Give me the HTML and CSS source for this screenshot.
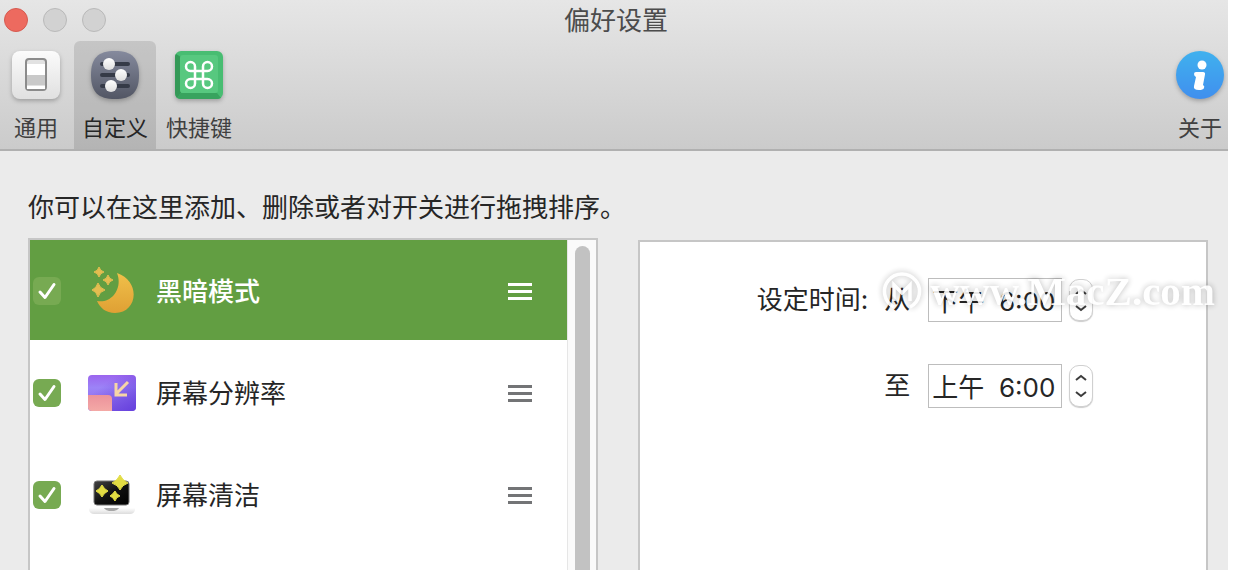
FILE: index.html
```
<!DOCTYPE html>
<html lang="zh-CN">

<head>
    <meta charset="UTF-8">
    <meta name="viewport" content="width=device-width, initial-scale=1.0">
    <title>偏好设置</title>
    <link rel="stylesheet" href="styles.css">
</head>

<body>
    <div class="window">
        <header class="header">
            <div class="titlebar">
                <div class="lights">
                    <button class="light light-close" type="button" aria-label="关闭"></button>
                    <button class="light" type="button" aria-label="最小化"></button>
                    <button class="light" type="button" aria-label="缩放"></button>
                </div>
                <h1 class="title">偏好设置</h1>
            </div>
            <nav class="toolbar">
                <button class="tab" type="button">
                    <svg class="tab-icon" viewBox="0 0 48 48">
                        <defs>
                            <linearGradient id="gPlate" x1="0" y1="0" x2="0" y2="1">
                                <stop offset="0" stop-color="#fbfbfb"/>
                                <stop offset="1" stop-color="#e0e0e0"/>
                            </linearGradient>
                        </defs>
                        <rect width="48" height="48" rx="8" fill="url(#gPlate)"/>
                        <rect x="14" y="8" width="20" height="31" rx="3" fill="#e2e2e2" stroke="#8b8b8b" stroke-width="2"/>
                        <rect x="15" y="13" width="18" height="11" fill="#fff"/>
                        <rect x="15" y="24" width="18" height="10" fill="#c9c9c9"/>
                        <rect x="15" y="35" width="18" height="3" fill="#fff"/>
                    </svg>
                    <span>通用</span>
                </button>
                <button class="tab tab-active" type="button">
                    <svg class="tab-icon" viewBox="0 0 48 48">
                        <defs>
                            <linearGradient id="gSlate" x1="0" y1="0" x2="0" y2="1">
                                <stop offset="0" stop-color="#858a9d"/>
                                <stop offset="1" stop-color="#525664"/>
                            </linearGradient>
                            <linearGradient id="gKnob" x1="0" y1="0" x2="0" y2="1">
                                <stop offset="0" stop-color="#fff"/>
                                <stop offset="1" stop-color="#dedede"/>
                            </linearGradient>
                        </defs>
                        <path d="M24 0C41 0 48 7 48 24S41 48 24 48 0 41 0 24 7 0 24 0Z" fill="url(#gSlate)"/>
                        <path d="M11 13H37M11 24H37M11 35H37" stroke="#353a47" stroke-width="4" stroke-linecap="round"/>
                        <circle cx="18" cy="13" r="6" fill="url(#gKnob)"/>
                        <circle cx="30" cy="24" r="6" fill="url(#gKnob)"/>
                        <circle cx="20" cy="35" r="6" fill="url(#gKnob)"/>
                    </svg>
                    <span>自定义</span>
                </button>
                <button class="tab" type="button">
                    <svg class="tab-icon" viewBox="0 0 48 48">
                        <rect width="48" height="48" rx="6" fill="#48bd72"/>
                        <path d="M1 3L6 6V42L2 47Q0 45 0 42V6Q0 4 1 3Z" fill="#349957"/>
                        <path d="M2 47L6 42H42L46 47Q44 48 42 48H6Q4 48 2 47Z" fill="#38a35e"/>
                        <rect x="5" y="4" width="38" height="38" rx="3" fill="#57c87f"/>
                        <path d="M20 20H28V28H20ZM20 20H15.500A4.500 4.500 0 1 1 20 15.500ZM28 20V15.500A4.500 4.500 0 1 1 32.500 20ZM28 28H32.500A4.500 4.500 0 1 1 28 32.500ZM20 28V32.500A4.500 4.500 0 1 1 15.500 28Z" fill="none" stroke="#fff" stroke-width="2.500"/>
                    </svg>
                    <span>快捷键</span>
                </button>
                <button class="tab tab-about" type="button">
                    <svg class="tab-icon" viewBox="0 0 48 48">
                        <defs>
                            <linearGradient id="gBlue" x1="0" y1="0" x2="0" y2="1">
                                <stop offset="0" stop-color="#40b1ee"/>
                                <stop offset="1" stop-color="#408fee"/>
                            </linearGradient>
                        </defs>
                        <circle cx="24" cy="24" r="24" fill="url(#gBlue)"/>
                        <circle cx="26" cy="14" r="4.500" fill="#fff"/>
                        <path d="M20 21H27Q29.500 21 29 23.500L27 34Q29 35 28 37Q27 39 23 39Q17 39 18 35L20 26Q18 25 18 23Q18 21 20 21Z" fill="#fff"/>
                    </svg>
                    <span>关于</span>
                </button>
            </nav>
        </header>

        <main class="content">
            <p class="intro">你可以在这里添加、删除或者对开关进行拖拽排序。</p>
            <div class="panels">
                <section class="list-panel">
                    <ul class="list">
                        <li class="row row-selected">
                            <span class="check">
                                <input type="checkbox" id="dark" checked>
                                <svg viewBox="0 0 28 28"><path d="M7 15L12 20.500L21 7.500"/></svg>
                            </span>
                            <svg class="row-icon" viewBox="0 0 48 48">
                                <defs>
                                    <linearGradient id="gMoon" x1="0" y1="0" x2="0" y2="1">
                                        <stop offset="0" stop-color="#f0c04a"/>
                                        <stop offset="1" stop-color="#dfa034"/>
                                    </linearGradient>
                                </defs>
                                <path d="M29 6C53 14 50 46 27 46C18 46 12 41 9 34C24 37 35 21 29 6Z" fill="url(#gMoon)"/>
                                <path d="M11 0Q12 4 16 5Q12 6 11 10Q10 6 6 5Q10 4 11 0ZM20 8Q21 12 25 13Q21 14 20 18Q19 14 15 13Q19 12 20 8ZM10 16Q11.500 21 17 23Q11.500 24.500 10 30Q8.500 24.500 4 23Q8.500 21 10 16Z" fill="#e4bd50" stroke="#e4bd50"/>
                            </svg>
                            <label for="dark">黑暗模式</label>
                            <button class="handle" type="button" aria-label="拖拽排序"><i></i><i></i><i></i></button>
                        </li>
                        <li class="row">
                            <span class="check">
                                <input type="checkbox" id="resolution" checked>
                                <svg viewBox="0 0 28 28"><path d="M7 15L12 20.500L21 7.500"/></svg>
                            </span>
                            <svg class="row-icon" viewBox="0 0 48 48">
                                <defs>
                                    <linearGradient id="gViolet" x1="0" y1="0" x2="0" y2="1">
                                        <stop offset="0" stop-color="#9b65ee"/>
                                        <stop offset=".350" stop-color="#9c83f7"/>
                                        <stop offset="1" stop-color="#8a67e8"/>
                                    </linearGradient>
                                    <linearGradient id="gDeep" x1="0" y1="0" x2="1" y2="1">
                                        <stop offset=".300" stop-color="#6540dd" stop-opacity="0"/>
                                        <stop offset="1" stop-color="#6540dd"/>
                                    </linearGradient>
                                    <linearGradient id="gPink" x1="0" y1="0" x2="0" y2="1">
                                        <stop offset="0" stop-color="#ec929b"/>
                                        <stop offset="1" stop-color="#f4a9a6"/>
                                    </linearGradient>
                                </defs>
                                <rect y="6" width="48" height="36" rx="4" fill="url(#gViolet)"/>
                                <rect y="6" width="48" height="36" rx="4" fill="url(#gDeep)"/>
                                <path d="M0 26H20Q24 26 24 30V42H4Q0 42 0 38Z" fill="url(#gPink)"/>
                                <path d="M40 13L29 24M28 14V26H39" fill="none" stroke="#f6d5a6" stroke-width="3"/>
                            </svg>
                            <label for="resolution">屏幕分辨率</label>
                            <button class="handle" type="button" aria-label="拖拽排序"><i></i><i></i><i></i></button>
                        </li>
                        <li class="row">
                            <span class="check">
                                <input type="checkbox" id="clean" checked>
                                <svg viewBox="0 0 28 28"><path d="M7 15L12 20.500L21 7.500"/></svg>
                            </span>
                            <svg class="row-icon" viewBox="0 0 48 48">
                                <defs>
                                    <linearGradient id="gBase" x1="0" y1="0" x2="0" y2="1">
                                        <stop offset="0" stop-color="#fff"/>
                                        <stop offset="1" stop-color="#dcdcdc"/>
                                    </linearGradient>
                                    <linearGradient id="gScreen" x1="0" y1="0" x2="1" y2="1">
                                        <stop offset="0" stop-color="#444"/>
                                        <stop offset=".500" stop-color="#111"/>
                                        <stop offset="1" stop-color="#000"/>
                                    </linearGradient>
                                </defs>
                                <path d="M1 37H47V39Q46 43 42 43H6Q2 43 1 39Z" fill="url(#gBase)"/>
                                <path d="M16 37H31Q29 40 26 40H21Q18 40 16 37Z" fill="#a6a6a6"/>
                                <rect x="6" y="10" width="35" height="24" rx="3" fill="url(#gScreen)" stroke="#777" stroke-width="1"/>
                                <path d="M32 4Q34 9 40 12Q34 14 32 19Q30 14 24 12Q30 9 32 4ZM14 14Q16 18 20 20Q16 22 14 26Q12 22 8 20Q12 18 14 14ZM27 20Q28 23 32 25Q28 26 27 30Q25 26 22 25Q25 23 27 20Z" fill="#e2dc43" stroke="#e2dc43"/>
                            </svg>
                            <label for="clean">屏幕清洁</label>
                            <button class="handle" type="button" aria-label="拖拽排序"><i></i><i></i><i></i></button>
                        </li>
                    </ul>
                    <div class="scrollbar">
                        <div class="thumb"></div>
                    </div>
                </section>

                <section class="detail-panel">
                    <form class="schedule">
                        <span class="caption">设定时间:</span>
                        <label for="from">从</label>
                        <input class="time" type="text" id="from" value="下午  6:00">
                        <span class="stepper">
                            <button type="button" aria-label="增加"><svg viewBox="0 0 12 8"><path d="M1 6L6 2L11 6"/></svg></button>
                            <button type="button" aria-label="减少"><svg viewBox="0 0 12 8"><path d="M1 2L6 6L11 2"/></svg></button>
                        </span>
                        <label class="to" for="to">至</label>
                        <input class="time" type="text" id="to" value="上午  6:00">
                        <span class="stepper">
                            <button type="button" aria-label="增加"><svg viewBox="0 0 12 8"><path d="M1 6L6 2L11 6"/></svg></button>
                            <button type="button" aria-label="减少"><svg viewBox="0 0 12 8"><path d="M1 2L6 6L11 2"/></svg></button>
                        </span>
                    </form>
                    <div class="watermark">
                        <svg viewBox="0 0 40 40">
                            <path d="M12 36A17.500 17.500 0 1 1 28 36M12 30V14L20 22L28 14V30" fill="none" stroke="#fff" stroke-width="3.500"/>
                        </svg>
                        <span>www.MacZ.com</span>
                    </div>
                </section>
            </div>
        </main>
    </div>
</body>

</html>
```

FILE: styles.css
```
* {
    box-sizing: border-box;
}

body {
    margin: 0;
    height: 100vh;
    padding: 0 10px 14px 0;
    background: #fff;
    color: #262626;
    font-family: Inter, "Noto Sans CJK SC", sans-serif;
    font-size: 26px;
    line-height: 36px;
}

button {
    margin: 0;
    padding: 0;
    border: 0;
    background: none;
    font: inherit;
    color: inherit;
}

.window {
    display: flex;
    flex-direction: column;
    height: 100%;
    overflow: hidden;
    background: #ebebeb;
}

/* 标题栏和工具栏 */
.header {
    background: linear-gradient(#e6e6e6, #cbcbcb);
    border-bottom: 2px solid #b0b0b0;
}

.titlebar {
    display: grid;
    grid-template-columns: 1fr auto 1fr;
    align-items: center;
    height: 41px;
    padding-left: 4px;
}

.lights {
    display: flex;
    gap: 15px;
    padding-bottom: 2px;
}

.light {
    width: 24px;
    height: 24px;
    border: 1px solid #b9b9b9;
    border-radius: 50%;
    background: #d2d2d2;
}

.light-close {
    border-color: #d65a50;
    background: #ed6a5f;
}

.title {
    margin: 0;
    font-size: 26px;
    font-weight: 400;
    color: #4c4c4c;
}

.toolbar {
    display: flex;
    gap: 2px;
}

.tab {
    display: flex;
    flex-direction: column;
    align-items: center;
    gap: 14px;
    min-width: 72px;
    padding: 10px 8px 6px;
    border-radius: 6px 6px 0 0;
    font-size: 22px;
    line-height: 30px;
    color: #404040;
}

.tab-active {
    background: rgba(0, 0, 0, 0.11);
    color: #262626;
}

.tab-about {
    min-width: 0;
    margin-left: auto;
    padding: 10px 4px 6px 8px;
}

.tab-icon {
    width: 48px;
    height: 48px;
    overflow: visible;
    filter: drop-shadow(0 2px 2px rgba(0, 0, 0, 0.25));
}

/* 内容 */
.content {
    flex: 1;
    display: flex;
    flex-direction: column;
    min-height: 0;
    padding: 39px 20px 0 28px;
}

.intro {
    margin: 0 0 12px;
}

.panels {
    flex: 1;
    display: grid;
    grid-template-columns: 1fr 1fr;
    gap: 40px;
    min-height: 0;
}

.list-panel {
    display: flex;
    border: 2px solid #c6c6c6;
    border-bottom: 0;
    background: #fff;
}

.list {
    flex: 1;
    display: flex;
    flex-direction: column;
    gap: 2px;
    margin: 0;
    padding: 0;
    list-style: none;
}

.row {
    display: flex;
    align-items: center;
    height: 100px;
    padding: 2px 35px 0 3px;
}

.row label {
    padding-top: 2px;
}

.row-selected {
    background: #629e42;
    color: #fff;
    font-weight: 500;
}

.check {
    display: grid;
    width: 28px;
    height: 28px;
}

.check input,
.check svg {
    grid-area: 1 / 1;
    width: 28px;
    height: 28px;
    margin: 0;
}

.check input {
    appearance: none;
    border-radius: 6px;
    background: #77aa52;
}

.check svg {
    pointer-events: none;
    fill: none;
    stroke: #fff;
    stroke-width: 3;
    stroke-linecap: round;
    stroke-linejoin: round;
}

.row-icon {
    width: 48px;
    height: 48px;
    margin: 0 20px 0 27px;
}

.handle {
    display: grid;
    gap: 4px;
    width: 24px;
    margin-left: auto;
    color: #737476;
}

.handle i {
    height: 3px;
    background: currentColor;
}

.row-selected .handle {
    color: #fff;
}

.scrollbar {
    width: 29px;
    padding: 6px 6px 0 7px;
    border-left: 1px solid #e6e6e6;
    background: #fafafa;
}

.thumb {
    height: 100%;
    border-radius: 8px 8px 0 0;
    background: #c2c2c2;
}

.detail-panel {
    position: relative;
    margin-top: 2px;
    padding: 36px 0 0 4px;
    border: 2px solid #c6c6c6;
    border-bottom: 0;
    background: #fff;
}

.schedule {
    display: grid;
    grid-template-columns: auto auto 134px auto;
    justify-content: center;
    align-items: center;
    row-gap: 42px;
}

.caption {
    margin-right: 16px;
}

.schedule label {
    margin-right: 18px;
}

.to {
    grid-column: 2;
}

.time {
    width: 100%;
    height: 44px;
    padding: 0 3px 2px;
    border: 1px solid #bdbdbd;
    background: #fff;
    font: inherit;
    color: inherit;
}

.stepper {
    display: flex;
    flex-direction: column;
    width: 24px;
    height: 42px;
    margin-left: 7px;
    padding: 4px 0;
    border: 1px solid #d0d0d0;
    border-radius: 10px;
    background: #fff;
    box-shadow: 0 1px 1px rgba(0, 0, 0, 0.2);
}

.stepper button {
    flex: 1;
    display: grid;
    place-items: center;
}

.stepper svg {
    width: 12px;
    height: 8px;
    fill: none;
    stroke: #3c3c3c;
    stroke-width: 2;
}

/* 水印 */
.watermark {
    position: absolute;
    top: 29px;
    right: -9px;
    display: flex;
    align-items: center;
    gap: 8px;
    color: #fff;
    font: bold 41px/40px "Liberation Serif", serif;
    opacity: 0.9;
    pointer-events: none;
    filter: drop-shadow(0 0 3px rgba(0, 0, 0, 0.3));
}

.watermark svg {
    width: 40px;
    height: 40px;
}
```
